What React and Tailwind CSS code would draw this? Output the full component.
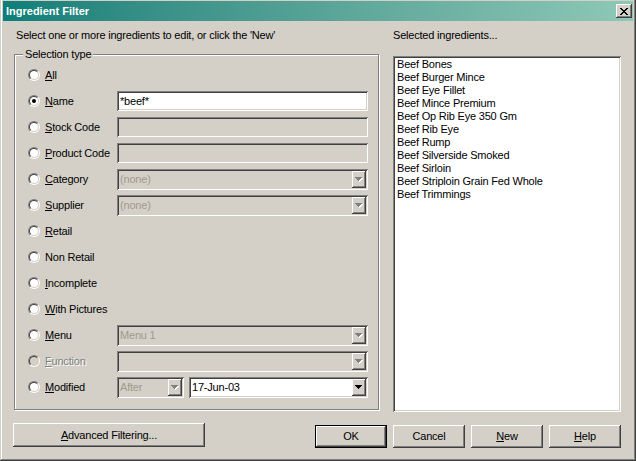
import React from "react";

const FONT = "[font-family:'Liberation_Sans',Arial,sans-serif] text-[11px] leading-[13px] tracking-[-0.2px]";
const SUNKEN = "shadow-[inset_1px_1px_0_#808080,inset_-1px_-1px_0_#ffffff,inset_2px_2px_0_#404040,inset_-2px_-2px_0_#d4d0c8]";
const RAISED = "shadow-[inset_-1px_-1px_0_#404040,inset_1px_1px_0_#ffffff,inset_-2px_-2px_0_#808080]";

function Radio({ checked, disabled }) {
  return (
    <span className="flex w-[12px] h-[12px] shrink-0 rounded-full border border-t-[#808080] border-l-[#808080] border-b-white border-r-white">
      <span
        className={
          "flex w-full h-full items-center justify-center rounded-full border border-t-[#404040] border-l-[#404040] border-b-[#d4d0c8] border-r-[#d4d0c8] " +
          (disabled ? "bg-[#d4d0c8]" : "bg-white")
        }
      >
        {checked && <span className="w-[4px] h-[4px] rounded-full bg-black" />}
      </span>
    </span>
  );
}

function Arrow({ disabled }) {
  const rows = [
    [0, 7],
    [1, 5],
    [2, 3],
    [3, 1],
  ];
  return (
    <svg width="8" height="5" viewBox="0 0 8 5" shapeRendering="crispEdges">
      {disabled &&
        rows.map(([y, w], i) => (
          <rect key={"s" + i} x={(7 - w) / 2 + 1} y={y + 1} width={w} height="1" fill="#ffffff" />
        ))}
      {rows.map(([y, w], i) => (
        <rect key={i} x={(7 - w) / 2} y={y} width={w} height="1" fill={disabled ? "#808080" : "#000000"} />
      ))}
    </svg>
  );
}

function Edit({ value, enabled }) {
  return (
    <div
      className={
        "w-[251px] h-[20px] flex items-center pl-[3px] " + SUNKEN + " " + (enabled ? "bg-white" : "bg-[#d4d0c8]")
      }
    >
      {value}
    </div>
  );
}

function Combo({ value, enabled, width = "w-[251px]" }) {
  return (
    <div
      className={
        width + " h-[21px] flex items-stretch p-[2px] " + SUNKEN + " " + (enabled ? "bg-white" : "bg-[#d4d0c8]")
      }
    >
      <div className={"flex-1 flex items-center pl-[1px] " + (enabled ? "text-black" : "text-[#a19a8d]")}>{value}</div>
      <div className={"w-[14px] flex items-center justify-center bg-[#d4d0c8] pt-[1px] " + RAISED}>
        <Arrow disabled={!enabled} />
      </div>
    </div>
  );
}

function Label({ text, u, disabled }) {
  let content = text;
  if (u !== undefined) {
    content = (
      <>
        {text.slice(0, u)}
        <u className="underline-offset-[1px]">{text[u]}</u>
        {text.slice(u + 1)}
      </>
    );
  }
  return (
    <span className={disabled ? "text-[#808080] [text-shadow:1px_1px_0_#ffffff]" : "text-black"}>{content}</span>
  );
}

function Row({ label, u, checked, disabled, children }) {
  return (
    <div className="h-[26px] flex items-center">
      <div className="w-[89px] shrink-0 flex items-center gap-[5px]">
        <Radio checked={checked} disabled={disabled} />
        <Label text={label} u={u} disabled={disabled} />
      </div>
      {children}
    </div>
  );
}

function Button({ children, def, className = "" }) {
  const inner = (
    <div className={"w-full h-full flex items-center justify-center bg-[#d4d0c8] " + RAISED}>{children}</div>
  );
  return (
    <div className={"h-[23px] " + className + (def ? " border border-black" : "")}>{inner}</div>
  );
}

function CloseGlyph() {
  const rows = [
    [0, 1, 6, 7],
    [1, 2, 5, 6],
    [2, 3, 4, 5],
    [3, 4],
    [2, 3, 4, 5],
    [1, 2, 5, 6],
    [0, 1, 6, 7],
  ];
  return (
    <svg width="8" height="7" viewBox="0 0 8 7" shapeRendering="crispEdges">
      {rows.map((xs, y) => xs.map((x) => <rect key={y + "-" + x} x={x} y={y} width="1" height="1" fill="#000" />))}
    </svg>
  );
}

const items = [
  "Beef Bones",
  "Beef Burger Mince",
  "Beef Eye Fillet",
  "Beef Mince Premium",
  "Beef Op Rib Eye 350 Gm",
  "Beef Rib Eye",
  "Beef Rump",
  "Beef Silverside Smoked",
  "Beef Sirloin",
  "Beef Striploin Grain Fed Whole",
  "Beef Trimmings",
];

export default function App() {
  return (
    <div
      className={
        "w-[636px] h-[461px] bg-[#d4d0c8] px-[3px] pt-[1px] pb-[3px] flex flex-col text-black " +
        FONT +
        " shadow-[inset_-1px_-1px_0_#404040,inset_1px_0_0_#d4d0c8,inset_-2px_-2px_0_#808080,inset_2px_0_0_#ffffff]"
      }
    >
      {/* Title bar */}
      <div className="h-[20px] shrink-0 flex items-center justify-between pl-[3px] pr-[1px] bg-gradient-to-r from-[#0a7f79] to-[#8ec8b7]">
        <span className="text-white font-bold text-[11px] tracking-normal">Ingredient Filter</span>
        <div className={"w-[16px] h-[14px] flex items-center justify-center bg-[#d4d0c8] " + RAISED}>
          <CloseGlyph />
        </div>
      </div>

      {/* Content */}
      <div className="flex-1 flex flex-col pl-[10px] pr-[12px]">
        <div className="flex ml-[1px] gap-[13px]">
          {/* Left column */}
          <div className="w-[366px] flex flex-col">
            <div className="mt-[8px] pl-[2px] h-[13px] whitespace-nowrap">
              Select one or more ingredients to edit, or click the 'New'
            </div>
            <div className="relative mt-[12px] w-[365px] h-[356px] border border-[#808080] shadow-[inset_1px_1px_0_#ffffff,1px_1px_0_#ffffff] pt-[7px] pl-[13px]">
              <span className="absolute left-[8px] top-[-7px] px-[2px] bg-[#d4d0c8]">Selection type</span>
              <Row label="All" u={0} />
              <Row label="Name" u={0} checked>
                <Edit value="*beef*" enabled />
              </Row>
              <Row label="Stock Code" u={0}>
                <Edit />
              </Row>
              <Row label="Product Code" u={0}>
                <Edit />
              </Row>
              <Row label="Category" u={0}>
                <Combo value="(none)" />
              </Row>
              <Row label="Supplier" u={0}>
                <Combo value="(none)" />
              </Row>
              <Row label="Retail" u={0} />
              <Row label="Non Retail" />
              <Row label="Incomplete" u={0} />
              <Row label="With Pictures" u={0} />
              <Row label="Menu" u={0}>
                <Combo value="Menu 1" />
              </Row>
              <Row label="Function" u={0} disabled>
                <Combo value="" />
              </Row>
              <Row label="Modified" u={0}>
                <div className="flex gap-[5px]">
                  <Combo value="After" width="w-[67px]" />
                  <Combo value="17-Jun-03" enabled width="w-[179px]" />
                </div>
              </Row>
            </div>
          </div>

          {/* Right column */}
          <div className="w-[228px] flex flex-col">
            <div className="mt-[8px] h-[13px] whitespace-nowrap">Selected ingredients...</div>
            <div className={"mt-[14px] h-[356px] bg-white pt-[2px] pl-[4px] " + SUNKEN}>
              {items.map((t) => (
                <div key={t} className="h-[13px] whitespace-nowrap">
                  {t}
                </div>
              ))}
            </div>
          </div>
        </div>

        {/* Bottom buttons */}
        <div className="flex items-start justify-between mt-[11px]">
          <Button className="w-[192px] h-[24px]">
            <span>
              <u>A</u>dvanced Filtering...
            </span>
          </Button>
          <div className="flex gap-[6px] mt-[2px]">
            <Button def className="w-[72px]">
              OK
            </Button>
            <Button className="w-[72px]">Cancel</Button>
            <Button className="w-[72px]">
              <span>
                <u>N</u>ew
              </span>
            </Button>
            <Button className="w-[72px]">
              <span>
                <u>H</u>elp
              </span>
            </Button>
          </div>
        </div>
      </div>
    </div>
  );
}
